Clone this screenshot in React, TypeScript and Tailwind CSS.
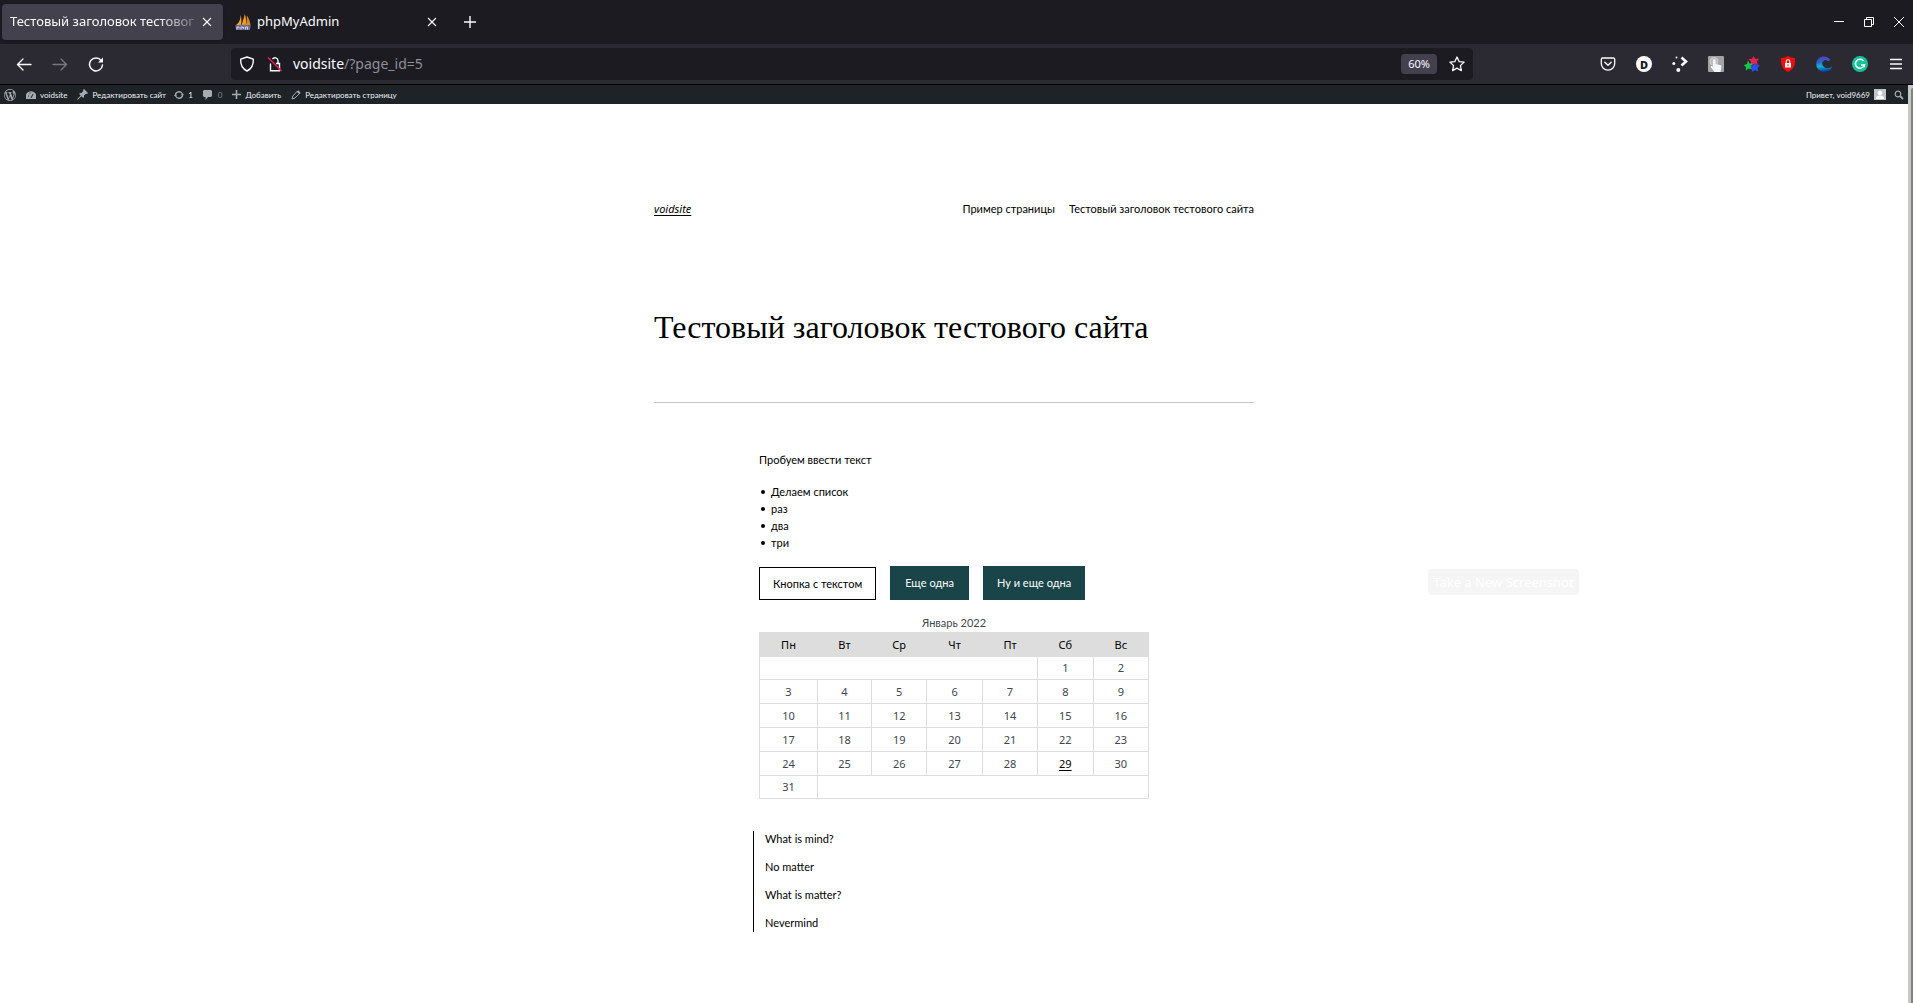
import React from "react";

const week = ["Пн", "Вт", "Ср", "Чт", "Пт", "Сб", "Вс"];
const rows = [
  [3, 4, 5, 6, 7, 8, 9],
  [10, 11, 12, 13, 14, 15, 16],
  [17, 18, 19, 20, 21, 22, 23],
  [24, 25, 26, 27, 28, 29, 30],
];

function Cross() {
  return (
    <svg width="10" height="10" viewBox="0 0 10 10" stroke="#fbfbfe" strokeWidth="1.1" fill="none">
      <path d="M1 1l8 8M9 1l-8 8" />
    </svg>
  );
}

function SailLogo() {
  return (
    <svg width="16" height="16" viewBox="0 0 16 16" className="shrink-0">
      <path d="M5.500.8C5.800 5 4.500 8.500 1 11h5C6.800 7 6.500 4 5.500.8z" fill="#e9a33b" />
      <path d="M9.800 0c-.8 3.500-2 7.500-3.300 11h4.200c.8-3.500.4-7.500-.9-11z" fill="#f89c0e" />
      <path d="M11.800 1.500c.3 3-.1 6.500-1 9.500h4.700c-.4-3.500-1.700-7-3.700-9.500z" fill="#d8892a" />
      <path d="M.3 11.300c4-.9 11-.9 15.500 0L15 16H1z" fill="#6b6f95" />
      <path d="M2 15.500v-2.500h2v1.500M6 15.500v-2.500h1.500l1 1.500V13M10.500 15.500V13h2v2.500" stroke="#d4d6ea" fill="none" />
    </svg>
  );
}

function TabStrip() {
  return (
    <div className="flex h-11 items-center bg-[#1c1b22] pl-0.5 text-[#fbfbfe]">
      <div className="flex h-9 w-[221px] items-center rounded bg-[#42414d] pr-[11px] pl-2 shadow">
        <a href="#tab" className="text-[13px] whitespace-nowrap [mask-image:linear-gradient(to_right,#000_80%,#0004)]">
          Тестовый заголовок тестовог
        </a>
        <button aria-label="Закрыть вкладку" className="ml-auto"><Cross /></button>
      </div>
      <div className="flex h-9 w-[225px] items-center gap-1.5 pr-[11px] pl-3">
        <SailLogo />
        <a href="#pma" className="text-[13px]">phpMyAdmin</a>
        <button aria-label="Закрыть phpMyAdmin" className="ml-auto"><Cross /></button>
      </div>
      <button aria-label="Новая вкладка" className="ml-4">
        <svg width="12" height="12" viewBox="0 0 12 12" stroke="#fbfbfe" strokeWidth="1.4"><path d="M6 0v12M0 6h12" /></svg>
      </button>
      <div className="ml-auto flex items-center gap-5 pr-[9px]">
        <button aria-label="Свернуть">
          <svg width="10" height="10" viewBox="0 0 10 10" stroke="#fff"><path d="M0 4.500h10" /></svg>
        </button>
        <button aria-label="Восстановить">
          <svg width="10" height="10" viewBox="0 0 10 10" stroke="#fff" fill="none"><path d="M.5 2.500h7v7h-7zM2.500 2.500v-2h7v7h-2" /></svg>
        </button>
        <button aria-label="Закрыть">
          <svg width="10" height="10" viewBox="0 0 10 10" stroke="#fff"><path d="M0 0l10 10M10 0L0 10" /></svg>
        </button>
      </div>
    </div>
  );
}

function Extensions() {
  return (
    <div className="ml-auto flex items-center gap-5">
      <button aria-label="Pocket">
        <svg width="16" height="16" viewBox="0 0 16 16" stroke="#fbfbfe" fill="none" strokeWidth="1.3" strokeLinecap="round" strokeLinejoin="round">
          <path d="M2.500 2h11a1.200 1.200 0 0 1 1.200 1.200V7.500a6.700 6.700 0 0 1-13.400 0V3.200A1.200 1.200 0 0 1 2.500 2z" />
          <path d="M4.800 6.200L8 9.200l3.200-3" />
        </svg>
      </button>
      <button aria-label="Dashlane" className="flex size-4 items-center justify-center rounded-full bg-white text-[11px] leading-none font-black text-[#1c1b22]">D</button>
      <button aria-label="Plasma">
        <svg width="16" height="16" viewBox="0 0 16 16" fill="#fbfbfe">
          <path d="M9.500 1.500l4.500 4-4.500 4" stroke="#fbfbfe" strokeWidth="2.600" fill="none" />
          <circle cx="4.500" cy="1.500" r="1" /><circle cx="1.800" cy="7.500" r="1.500" /><circle cx="6.300" cy="14" r="2" />
        </svg>
      </button>
      <button aria-label="Жесты">
        <svg width="16" height="16" viewBox="0 0 16 16">
          <rect width="16" height="16" rx="1" fill="#a3a3a3" />
          <circle cx="6" cy="5.500" r="4" fill="#bdbdbd" stroke="#cfcfcf" />
          <path d="M5 4.500a1.300 1.300 0 0 1 2.600 0V8l4.500 1c1 .3 1.400 1 1.200 2l-.8 5H6.500L3 11.500c-.6-.9.300-1.800 1.200-1.200l.8.700z" fill="#f2f7fc" />
        </svg>
      </button>
      <button aria-label="Звёзды">
        <svg width="16" height="16" viewBox="0 0 16 16">
          <path d="M9.500 0l1.900 2.900 3.800-.3-2.500 3.200 1.600 3.200-4-.9-3.700 1.300.4-4L4.200 3l3.900-.2z" fill="#ef1f4b" />
          <path d="M4 4.500l1.600 3 3.200-.1-2 2.800 1.100 3.300-3.200-1L1.800 14.600l.1-3.500L-.4 9 3 8z" fill="#12c94a" />
          <path d="M10.800 6l1.600 3 3.600.3-2.500 2.600.8 3.600-3.300-1.300L7.800 16l.3-3.800L6 9.600l3.400-.3z" fill="#2450f0" />
        </svg>
      </button>
      <button aria-label="Блокировщик">
        <svg width="16" height="16" viewBox="0 0 16 16">
          <path d="M8 0c2 1.300 4.400 2 7 2 .2 6.500-.6 11-7 14C1.600 13 .8 8.500 1 2c2.600 0 5-.7 7-2z" fill="#f20d0d" />
          <rect x="5" y="7" width="6" height="4.500" fill="#fff" />
          <path d="M6.200 7V5.500a1.800 1.800 0 0 1 3.600 0V7" stroke="#fff" strokeWidth="1.100" fill="none" />
          <path d="M8 8.300v2" stroke="#f20d0d" />
        </svg>
      </button>
      <button aria-label="Волна">
        <svg width="16" height="16" viewBox="0 0 16 16">
          <defs>
            <linearGradient id="wave" x1=".6" y1="0" x2=".7" y2="1">
              <stop offset="0" stopColor="#5a3fc0" /><stop offset=".3" stopColor="#2a62c8" /><stop offset=".6" stopColor="#12b4d6" /><stop offset="1" stopColor="#0a2a9a" />
            </linearGradient>
          </defs>
          <path d="M14 3.500C12 .500 8 0 5 1 1.500 2.500 0 5.500.3 9c.5 4 4 7 8 7 3.700 0 6.700-2 7.700-5.500-2 1.800-5 2.300-7.200 1C6 10 5.500 6.800 7.500 5c1.600-1.400 3.300-1 4.300.3 1-.2 1.800-.8 2.200-1.800z" fill="url(#wave)" />
        </svg>
      </button>
      <button aria-label="Grammarly">
        <svg width="16" height="16" viewBox="0 0 16 16" fill="none">
          <circle cx="8" cy="8" r="8" fill="#15c39a" />
          <path d="M11.500 5A4.500 4.500 0 1 0 12.300 9H9" stroke="#fff" strokeWidth="1.500" /><path d="M12.300 8.300v3" stroke="#fff" strokeWidth="1.300" />
        </svg>
      </button>
      <button aria-label="Меню">
        <svg width="16" height="16" viewBox="0 0 16 16" stroke="#fbfbfe" strokeWidth="1.300"><path d="M2 3.500h12M2 8h12M2 12.500h12" /></svg>
      </button>
    </div>
  );
}

function Toolbar() {
  return (
    <div className="flex h-[41px] items-center border-b border-black bg-[#2b2a33] pr-[9px] pl-4 text-[#fbfbfe]">
      <div className="flex w-[215px] items-center gap-5">
        <button aria-label="Назад">
          <svg width="16" height="16" viewBox="0 0 16 16" stroke="#fbfbfe" strokeWidth="1.400" fill="none" strokeLinecap="round" strokeLinejoin="round"><path d="M15 8.500H1.500M7 3L1.500 8.500 7 14" /></svg>
        </button>
        <button aria-label="Вперёд">
          <svg width="16" height="16" viewBox="0 0 16 16" stroke="#77767e" strokeWidth="1.400" fill="none" strokeLinecap="round" strokeLinejoin="round"><path d="M1 8.500h13.500M9 3l5.500 5.500L9 14" /></svg>
        </button>
        <button aria-label="Обновить">
          <svg width="16" height="16" viewBox="0 0 16 16" stroke="#fbfbfe" strokeWidth="1.500" fill="none" strokeLinecap="round"><path d="M13.300 4.600A6.500 6.500 0 1 0 14.500 9" /><path d="M15 1.500V6.500H10z" fill="#fbfbfe" stroke="none" /></svg>
        </button>
      </div>
      <div className="flex h-8 w-[1242px] items-center rounded bg-[#1c1b22] pr-2 pl-2">
        <button aria-label="Защита">
          <svg width="16" height="16" viewBox="0 0 16 16" stroke="#fbfbfe" strokeWidth="1.400" fill="none" strokeLinejoin="round"><path d="M8 1L14.300 3.200c.3 5-1.300 9.300-6.300 11.800C3 12.500 1.400 8.200 1.700 3.200z" /></svg>
        </button>
        <button aria-label="Соединение" className="ml-3">
          <svg width="16" height="16" viewBox="0 0 16 16" stroke="#fbfbfe" strokeWidth="1.400" fill="none"><path d="M5.500 3.200A3 3 0 0 1 11 4.500V7M3.500 7.500v7.300h9V7.500H9" /><path d="M1 1.500l13.500 13.500" stroke="#e31b4c" strokeWidth="1.600" /></svg>
        </button>
        <a href="#url" className="ml-2.5 text-sm text-[#fbfbfe]">voidsite<span className="text-[#8f8f98]">/?page_id=5</span></a>
        <button className="ml-auto h-5 w-9 rounded-sm bg-[#42414d] text-[11px]">60%</button>
        <button aria-label="В закладки" className="ml-3">
          <svg width="16" height="16" viewBox="0 0 16 16" stroke="#fbfbfe" strokeWidth="1.300" fill="none" strokeLinejoin="round"><path d="M8 1l2.100 4.600 5 .5-3.700 3.500 1 5L8 12.100l-4.400 2.500 1-5L.9 6.100l5-.5z" /></svg>
        </button>
      </div>
      <Extensions />
    </div>
  );
}

function AdminBar() {
  return (
    <div className="flex h-[19px] items-center bg-[#1d2327] pr-1 pl-1 font-[Lato,sans-serif] text-[8px] leading-none text-[#f0f0f1]">
      <a href="#wp" aria-label="WordPress">
        <svg width="12" height="12" viewBox="0 0 20 20" fill="#a7aaad">
          <path d="M20 10c0-5.510-4.490-10-10-10C4.480 0 0 4.490 0 10c0 5.520 4.480 10 10 10 5.510 0 10-4.480 10-10zM7.780 15.370L4.370 6.220c.55-.02 1.170-.08 1.170-.08.5-.06.44-1.130-.06-1.110 0 0-1.450.11-2.370.11-.18 0-.37 0-.58-.01C4.120 2.690 6.870 1.110 10 1.110c2.330 0 4.450.87 6.050 2.340-.68-.11-1.650.39-1.650 1.580 0 .74.450 1.360.9 2.100.35.61.55 1.360.55 2.460 0 1.490-1.400 5-1.400 5l-3.030-8.370c.54-.02.82-.17.82-.17.5-.05.44-1.250-.06-1.220 0 0-1.440.12-2.380.12-.87 0-2.330-.12-2.330-.12-.5-.03-.56 1.200-.06 1.220l.92.08 1.260 3.410zM17.410 10c.24-.64.740-1.870.430-4.250.7 1.290 1.050 2.710 1.050 4.250 0 3.290-1.730 6.240-4.400 7.780.97-2.590 1.940-5.200 2.920-7.780zM6.100 18.090C3.120 16.650 1.110 13.530 1.110 10c0-1.300.23-2.480.72-3.590C3.250 10.300 4.670 14.200 6.100 18.090zm4.030-6.630l2.580 6.980c-.86.29-1.760.45-2.710.45-.79 0-1.570-.11-2.290-.33.81-2.380 1.620-4.740 2.420-7.100z" />
        </svg>
      </a>
      <a href="#site" className="ml-2.5 flex items-center gap-1">
        <svg width="10" height="10" viewBox="0 0 10 10"><path d="M0 9a5.500 5.500 0 1 1 10 0z" fill="#a7aaad" /><path d="M5 8l2-4M2 6h1M4 2.500v1" stroke="#1d2327" /></svg>
        voidsite
      </a>
      <a href="#edit-site" className="ml-2.5 flex items-center gap-1">
        <svg width="11" height="11" viewBox="0 0 11 11" fill="#a7aaad"><path d="M7 0l4 4-1 1-1-.3-2 1.800c.2 1 0 1.800-.8 2.500L4.500 7.300 1 10.500 0 11l.6-1.200L3.700 6.500 2 4.800c.7-.7 1.500-1 2.500-.8l1.800-2L6 1z" /></svg>
        Редактировать сайт
      </a>
      <a href="#updates" className="ml-2 flex items-center gap-1">
        <svg width="10" height="10" viewBox="0 0 10 10" stroke="#a7aaad" strokeWidth="1.400" fill="none"><path d="M1.500 5.500A3.500 3.500 0 0 1 8 3.500M8.500 4.500A3.500 3.500 0 0 1 2 6.500" /><path d="M0 5h3L1.500 7zM7 5h3L8.500 3z" fill="#a7aaad" stroke="none" /></svg>
        1
      </a>
      <a href="#comments" className="ml-2.5 flex items-center gap-1.5 text-[#85888b]">
        <svg width="9" height="10" viewBox="0 0 9 10"><path d="M1 0h7l1 1v5L8 7H5L2.500 10V7H1L0 6V1z" fill="#a7aaad" /></svg>
        0
      </a>
      <a href="#add" className="ml-2.5 flex items-center gap-1">
        <svg width="9" height="9" viewBox="0 0 9 9" stroke="#a7aaad" strokeWidth="1.600"><path d="M4.500 0v9M0 4.500h9" /></svg>
        Добавить
      </a>
      <a href="#edit-page" className="ml-2.5 flex items-center gap-1">
        <svg width="10" height="10" viewBox="0 0 10 10" stroke="#a7aaad" fill="none"><path d="M1 9l.8-3L6.500 1l2.300 2.300L4 8z" /><path d="M6.500 1l2.300 2.300" strokeWidth="2" /></svg>
        Редактировать страницу
      </a>
      <a href="#profile" className="ml-auto flex items-center gap-1">
        Привет, void9669
        <svg width="12" height="11" viewBox="0 0 12 11"><rect width="12" height="11" fill="#c3c4c7" /><circle cx="6" cy="4" r="2.300" fill="#fff" /><path d="M2 10c0-3 2-3.500 4-3.500S10 7 10 10z" fill="#fff" /></svg>
      </a>
      <button aria-label="Поиск" className="ml-2">
        <svg width="10" height="10" viewBox="0 0 10 10" stroke="#a7aaad" fill="none"><circle cx="4" cy="4" r="2.800" strokeWidth="1.200" /><path d="M6 6l3 3" strokeWidth="1.800" /></svg>
      </button>
    </div>
  );
}

function Calendar() {
  const cell = "border border-[#ddd] p-0 font-normal";
  return (
    <table className="mt-[15px] w-full table-fixed border-collapse text-center font-['Noto_Sans',sans-serif] text-[11px] leading-4 text-[#40464d]">
      <caption className="h-[17px] caption-top font-[Lato,sans-serif]">Январь 2022</caption>
      <colgroup>
        <col className="w-[58px]" />
        <col className="w-[54px]" />
        <col span={5} />
      </colgroup>
      <thead>
        <tr className="h-6 bg-[#ddd] text-black">
          {week.map((d) => <th key={d} scope="col" className={cell}>{d}</th>)}
        </tr>
      </thead>
      <tbody>
        <tr className="h-[23px]">
          <td colSpan={5} className={cell} />
          <td className={cell}>1</td>
          <td className={cell}>2</td>
        </tr>
        {rows.map((r) => (
          <tr key={r[0]} className="h-6">
            {r.map((n) => (
              <td key={n} className={cell}>
                {n === 29 ? <a href="#29" className="text-black underline underline-offset-2">29</a> : n}
              </td>
            ))}
          </tr>
        ))}
        <tr className="h-[23px]">
          <td className={cell}>31</td>
          <td colSpan={6} className={cell} />
        </tr>
      </tbody>
    </table>
  );
}

function Page() {
  return (
    <main className="relative flex-1 bg-white font-[Lato,sans-serif] text-[11px] leading-4 text-black">
      <div className="mx-auto w-[600px] pt-[97px]">
        <header className="flex items-center justify-between">
          <a href="#home" className="font-['Noto_Sans',sans-serif] italic underline underline-offset-2">voidsite</a>
          <nav className="flex gap-3.5">
            <a href="#sample">Пример страницы</a>
            <a href="#test">Тестовый заголовок тестового сайта</a>
          </nav>
        </header>
        <h1 className="mt-[90px] font-['Liberation_Serif',serif] text-[32px] leading-10 whitespace-nowrap">Тестовый заголовок тестового сайта</h1>
        <hr className="mt-[55px] border-[#c8c8c8]" />
        <article className="mx-auto w-[390px] pt-[49px]">
          <p>Пробуем ввести текст</p>
          <ul className="mt-[15px] leading-[17px]">
            {["Делаем список", "раз", "два", "три"].map((t) => (
              <li key={t} className="flex items-center gap-1.5 pl-0.5 before:size-1 before:rounded-full before:bg-black">{t}</li>
            ))}
          </ul>
          <div className="mt-[15px] flex items-end gap-3.5">
            <button className="h-[33px] border border-black px-[13px]">Кнопка с текстом</button>
            <button className="h-[34px] bg-[#1a4548] px-[15px] text-white">Еще одна</button>
            <button className="h-[34px] bg-[#1a4548] px-3.5 text-white">Ну и еще одна</button>
          </div>
          <Calendar />
          <blockquote className="mt-8 -ml-1.5 flex flex-col gap-3 border-l border-black pb-px pl-[11px]">
            <p>What is mind?</p>
            <p>No matter</p>
            <p>What is matter?</p>
            <p>Nevermind</p>
          </blockquote>
        </article>
      </div>
      <div className="absolute top-[465px] left-[1428px] flex h-[26px] w-[151px] items-center justify-center rounded bg-[#f5f5f5] font-['Noto_Sans',sans-serif] text-[13px] text-white">Take a New Screenshot</div>
    </main>
  );
}

export default function App() {
  return (
    <div className="flex h-screen flex-col overflow-hidden font-['Noto_Sans',sans-serif]">
      <TabStrip />
      <Toolbar />
      <div className="flex flex-1">
        <div className="flex flex-1 flex-col">
          <AdminBar />
          <Page />
        </div>
        <div className="flex w-[5px] bg-[#c8c8c8] pt-[3px] pl-[3px]">
          <div className="flex-1 rounded-tl bg-[#7d837d]" />
        </div>
      </div>
    </div>
  );
}
